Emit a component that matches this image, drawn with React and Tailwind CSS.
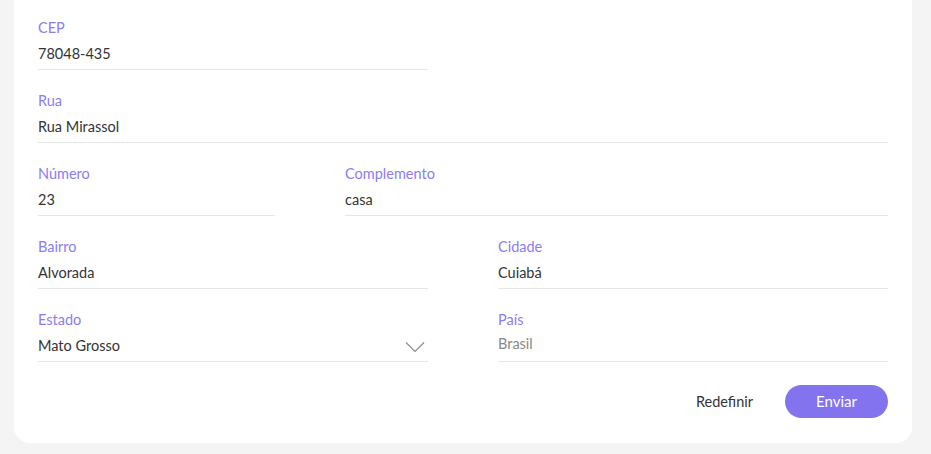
import React from "react";

const Field = ({ label, value, muted, select, className }) => {
  return (
    <div className={"flex flex-col " + (className || "")}>
      <label className="h-5 text-[14.5px] leading-5 text-[#8b7cf4]">{label}</label>
      <div className="h-[32px] flex items-center justify-between border-b border-[#e6e6e6]">
        <span
          className={
            "text-[14.5px] " + (muted ? "text-[#8a8a8a] -mt-[3px]" : "text-[#333333]")
          }
        >
          {value}
        </span>
        {select && (
          <svg width="20" height="12" viewBox="0 0 20 12" className="mr-[3px] mt-[3px]">
            <path d="M1 1.5 L10 10.5 L19 1.5" fill="none" stroke="#8c8c8c" strokeWidth="1.2" />
          </svg>
        )}
      </div>
    </div>
  );
};

const App = () => {
  return (
    <div
      className="min-h-[454px] bg-[#f4f4f4] pl-[14px] pr-[19px]"
      style={{ fontFamily: "Lato, 'Noto Sans', sans-serif" }}
    >
      <div className="bg-white rounded-b-2xl pt-[18px] pb-[25px] pl-6 pr-6 flex flex-col gap-[21px]">
        <div className="flex">
          <Field label="CEP" value="78048-435" className="w-[390px]" />
        </div>
        <Field label="Rua" value="Rua Mirassol" />
        <div className="flex gap-[70px]">
          <Field label="Número" value="23" className="w-[237px]" />
          <Field label="Complemento" value="casa" className="flex-1" />
        </div>
        <div className="flex gap-[70px]">
          <Field label="Bairro" value="Alvorada" className="w-[390px]" />
          <Field label="Cidade" value="Cuiabá" className="flex-1" />
        </div>
        <div className="flex gap-[70px]">
          <Field label="Estado" value="Mato Grosso" select className="w-[390px]" />
          <Field label="País" value="Brasil" muted className="flex-1" />
        </div>
        <div className="flex justify-end items-center gap-8 mt-[2px]">
          <button className="text-[14.5px] text-[#333333] px-0">Redefinir</button>
          <button className="w-[103px] h-[33px] rounded-full bg-[#8473ef] text-white text-[15px]">
            Enviar
          </button>
        </div>
      </div>
    </div>
  );
};

export default App;
